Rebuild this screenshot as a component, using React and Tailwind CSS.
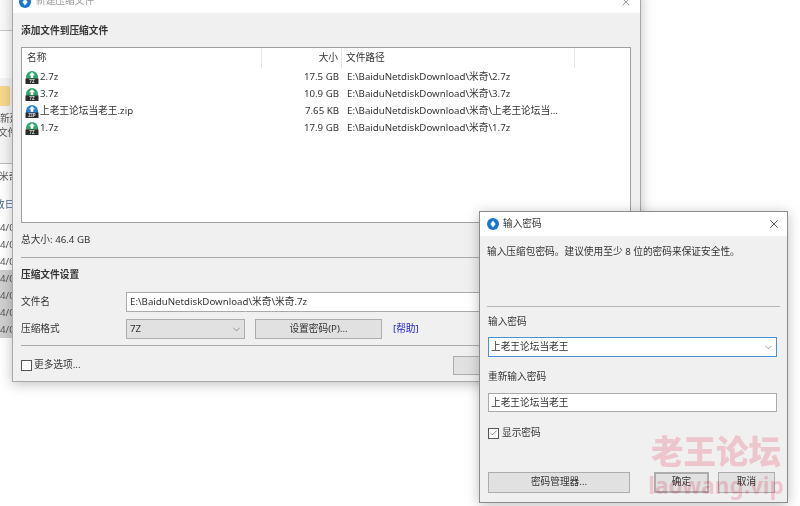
import { ChevronDown, X, Check } from 'lucide-react'

const FONT = 'font-["Noto_Sans","Noto_Sans_CJK_SC",sans-serif]'

const files = [
  { name: '2.7z', size: '17.5 GB', path: 'E:\\BaiduNetdiskDownload\\米奇\\2.7z', type: '7Z' },
  { name: '3.7z', size: '10.9 GB', path: 'E:\\BaiduNetdiskDownload\\米奇\\3.7z', type: '7Z' },
  { name: '上老王论坛当老王.zip', size: '7.65 KB', path: 'E:\\BaiduNetdiskDownload\\米奇\\上老王论坛当...', type: 'ZIP' },
  { name: '1.7z', size: '17.9 GB', path: 'E:\\BaiduNetdiskDownload\\米奇\\1.7z', type: '7Z' },
]

const dates = ['4/0', '4/0', '4/0', '4/0', '4/0', '4/0', '4/0']

function AppLogo({ className }) {
  return (
    <svg viewBox="0 0 12 12" className={className}>
      <circle cx="6" cy="6" r="6" fill="#1677d2" />
      <path d="M6 2.6 L8.6 6 L6 9.4 L3.4 6 Z" fill="#fff" />
    </svg>
  )
}

function ArchiveIcon({ type }) {
  const zip = type === 'ZIP'
  return (
    <svg viewBox="0 0 14 14" className="w-[14px] h-[14px] shrink-0">
      <path d="M1 9 V7 A6 6 0 0 1 13 7 V9 Z" fill={zip ? '#2a7fd6' : '#2fa56b'} />
      <path d="M7 2 L10 5.2 H8.3 V8 H5.7 V5.2 H4 Z" fill="#fff" />
      <rect x="0.5" y="8.5" width="13" height="5.5" fill="#2b2b2b" />
      <text x="7" y="13" textAnchor="middle" fontSize="4.6" fontWeight="700" fill="#ddd">{type}</text>
    </svg>
  )
}

function WinButton({ children, className = '' }) {
  return (
    <div className={`flex items-center justify-center bg-[#e1e1e1] border border-[#adadad] text-[9.7px] text-[#333] ${className}`}>
      {children}
    </div>
  )
}

function BehindStrip() {
  return (
    <div className="w-[12px] h-[338px] flex flex-col overflow-hidden text-[9.7px] text-[#555] leading-none">
      <div className="h-[31px] shrink-0 bg-[#fafafa] border-b border-[#c8c8c8]" />
      <div className="h-[47px] shrink-0 bg-white" />
      <div className="h-[86px] shrink-0 bg-[#f5f5f5] border-b border-[#bbb] pt-[8px]">
        <div className="h-[20px] w-[10px] bg-[#f6d98a] rounded-r-[2px]" />
        <div className="mt-[8px] whitespace-nowrap">新建</div>
        <div className="mt-[4px] -ml-[2px] whitespace-nowrap">文件</div>
      </div>
      <div className="h-[26px] shrink-0 flex items-center whitespace-nowrap">
        <span className="-ml-[1px]">米奇</span>
      </div>
      <div className="h-[29px] shrink-0 flex items-center whitespace-nowrap text-[#4a6a90]">
        <span className="-ml-[5px]">改日</span>
      </div>
      {dates.slice(0, 3).map((d, i) => (
        <div key={i} className="h-[17px] shrink-0 flex items-center whitespace-nowrap">{d}</div>
      ))}
      <div className="flex-1 bg-[#d0d0d0]">
        {dates.slice(3).map((d, i) => (
          <div key={i} className="h-[17px] flex items-center whitespace-nowrap">{d}</div>
        ))}
      </div>
    </div>
  )
}

function FileList() {
  return (
    <div className="h-[176px] bg-white border border-[#a0a0a0] text-[9.7px] text-[#333] shrink-0">
      <div className="h-[20px] flex">
        <div className="w-[240px] pl-[5px] pt-px flex items-center border-r border-[#e5e5e5]">名称</div>
        <div className="w-[80px] pr-[3px] pt-px flex items-center justify-end border-r border-[#e5e5e5]">大小</div>
        <div className="w-[233px] pl-[4px] pt-px flex items-center border-r border-[#e5e5e5]">文件路径</div>
      </div>
      {files.map((f) => (
        <div key={f.name} className="h-[17px] pt-px flex items-center">
          <div className="w-[240px] pl-[3px] flex items-center gap-[1px] whitespace-nowrap">
            <ArchiveIcon type={f.type} />
            {f.name}
          </div>
          <div className="w-[80px] pr-[3px] text-right">{f.size}</div>
          <div className="pl-[5px] whitespace-nowrap">{f.path}</div>
        </div>
      ))}
    </div>
  )
}

function CompressWindow() {
  return (
    <div className="absolute left-[12px] top-[-10px] w-[629px] h-[392px] flex flex-col bg-[#f0f0f0] border-x border-b border-[#a8a8a8] shadow-[0_2px_12px_rgba(0,0,0,0.25)]">
      <div className="h-[23px] shrink-0 bg-white flex items-center pl-[6px] pr-[8px] text-[9.7px] text-[#999]">
        <AppLogo className="w-[12px] h-[12px]" />
        <span className="ml-[5px]">新建压缩文件</span>
        <X size={12} strokeWidth={1.2} className="ml-auto text-[#555]" />
      </div>
      <div className="flex-1 flex flex-col pl-[8px] pr-[9px] text-[9.7px] text-[#333]">
        <div className="mt-[11px] h-[15px] flex items-center font-bold">添加文件到压缩文件</div>
        <div className="mt-[8px]"><FileList /></div>
        <div className="mt-[8px] h-[18px] flex items-center justify-between">
          <span>总大小: 46.4 GB</span>
          <WinButton className="w-[100px] h-[18px]" />
        </div>
        <div className="mt-[8px] h-px bg-[#aaa]" />
        <div className="mt-[10px] h-[15px] flex items-center font-bold">压缩文件设置</div>
        <div className="mt-[9px] h-[20px] flex items-center">
          <span className="w-[105px]">文件名</span>
          <div className="flex-1 h-[20px] bg-white border border-[#aaa] pl-[3px] flex items-center">E:\BaiduNetdiskDownload\米奇\米奇.7z</div>
        </div>
        <div className="mt-[7px] h-[20px] flex items-center">
          <span className="w-[105px]">压缩格式</span>
          <div className="w-[119px] h-[20px] bg-[#e1e1e1] border border-[#adadad] pl-[3px] pr-[2px] flex items-center justify-between">
            7Z
            <ChevronDown size={11} strokeWidth={1.2} className="text-[#555]" />
          </div>
          <WinButton className="ml-[10px] w-[127px] h-[20px]">设置密码(P)...</WinButton>
          <span className="ml-[11px] text-[#2222cc]">[帮助]</span>
        </div>
        <div className="mt-[6px] h-px bg-[#aaa]" />
        <div className="mt-[10px] h-[19px] flex items-center">
          <div className="w-[11px] h-[11px] bg-white border border-[#555]" />
          <span className="ml-[2px]">更多选项...</span>
          <WinButton className="ml-auto mr-[88px] w-[90px] h-[19px]" />
        </div>
      </div>
    </div>
  )
}

function PasswordDialog() {
  return (
    <div className="absolute left-[479px] top-[211px] w-[309px] h-[292px] flex flex-col bg-[#f0f0f0] border border-[#8c8c8c] shadow-[0_2px_12px_rgba(0,0,0,0.25)] text-[9.7px] text-[#333]">
      <div className="h-[24px] shrink-0 bg-white flex items-center pl-[7px] pr-[6px]">
        <AppLogo className="w-[12px] h-[12px]" />
        <span className="ml-[4px]">输入密码</span>
        <X size={14} strokeWidth={1.2} className="ml-auto text-[#222]" />
      </div>
      <div className="flex-1 flex flex-col pl-[8px] pr-[10px]">
        <div className="mt-[8px] -ml-px h-[15px] pt-px flex items-center">输入压缩包密码。建议使用至少 8 位的密码来保证安全性。</div>
        <div className="mt-[47px] h-px bg-[#b5b5b5] -mr-[3px] -ml-px" />
        <div className="mt-[8px] h-[15px] flex items-center">输入密码</div>
        <div className="mt-[7px] h-[20px] bg-white border border-[#4a90d9] pl-[2px] pr-[2px] flex items-center justify-between">
          上老王论坛当老王
          <ChevronDown size={11} strokeWidth={1.2} className="text-[#555]" />
        </div>
        <div className="mt-[13px] h-[15px] flex items-center">重新输入密码</div>
        <div className="mt-[8px] h-[19px] bg-white border border-[#aaa] pl-[2px] pt-px flex items-center">上老王论坛当老王</div>
        <div className="mt-[15px] h-[12px] flex items-center">
          <div className="w-[11px] h-[11px] bg-white border border-[#555] flex items-center justify-center">
            <Check size={10} strokeWidth={1.5} className="text-[#222]" />
          </div>
          <span className="ml-[3px]">显示密码</span>
        </div>
        <div className="mt-[33px] flex">
          <WinButton className="w-[142px] h-[21px]">密码管理器...</WinButton>
          <WinButton className="ml-[24px] w-[55px] h-[21px] border-2 border-[#1f7ad1]">确定</WinButton>
          <WinButton className="ml-[9px] w-[57px] h-[21px]">取消</WinButton>
        </div>
      </div>
    </div>
  )
}

function Watermark() {
  return (
    <div className="absolute left-[648px] top-[433px] w-[136px] flex flex-col items-center pointer-events-none text-[#fcd3da] mix-blend-multiply leading-none font-bold">
      <div className="text-[32.5px] h-[38px] flex items-center whitespace-nowrap font-black">老王论坛</div>
      <div className="text-[22.5px] mt-[4px] whitespace-nowrap">laowang.vip</div>
    </div>
  )
}

export default function App() {
  return (
    <div className={`relative w-[800px] h-[506px] overflow-hidden bg-white ${FONT} blur-[0.5px]`}>
      <BehindStrip />
      <CompressWindow />
      <PasswordDialog />
      <Watermark />
    </div>
  )
}
